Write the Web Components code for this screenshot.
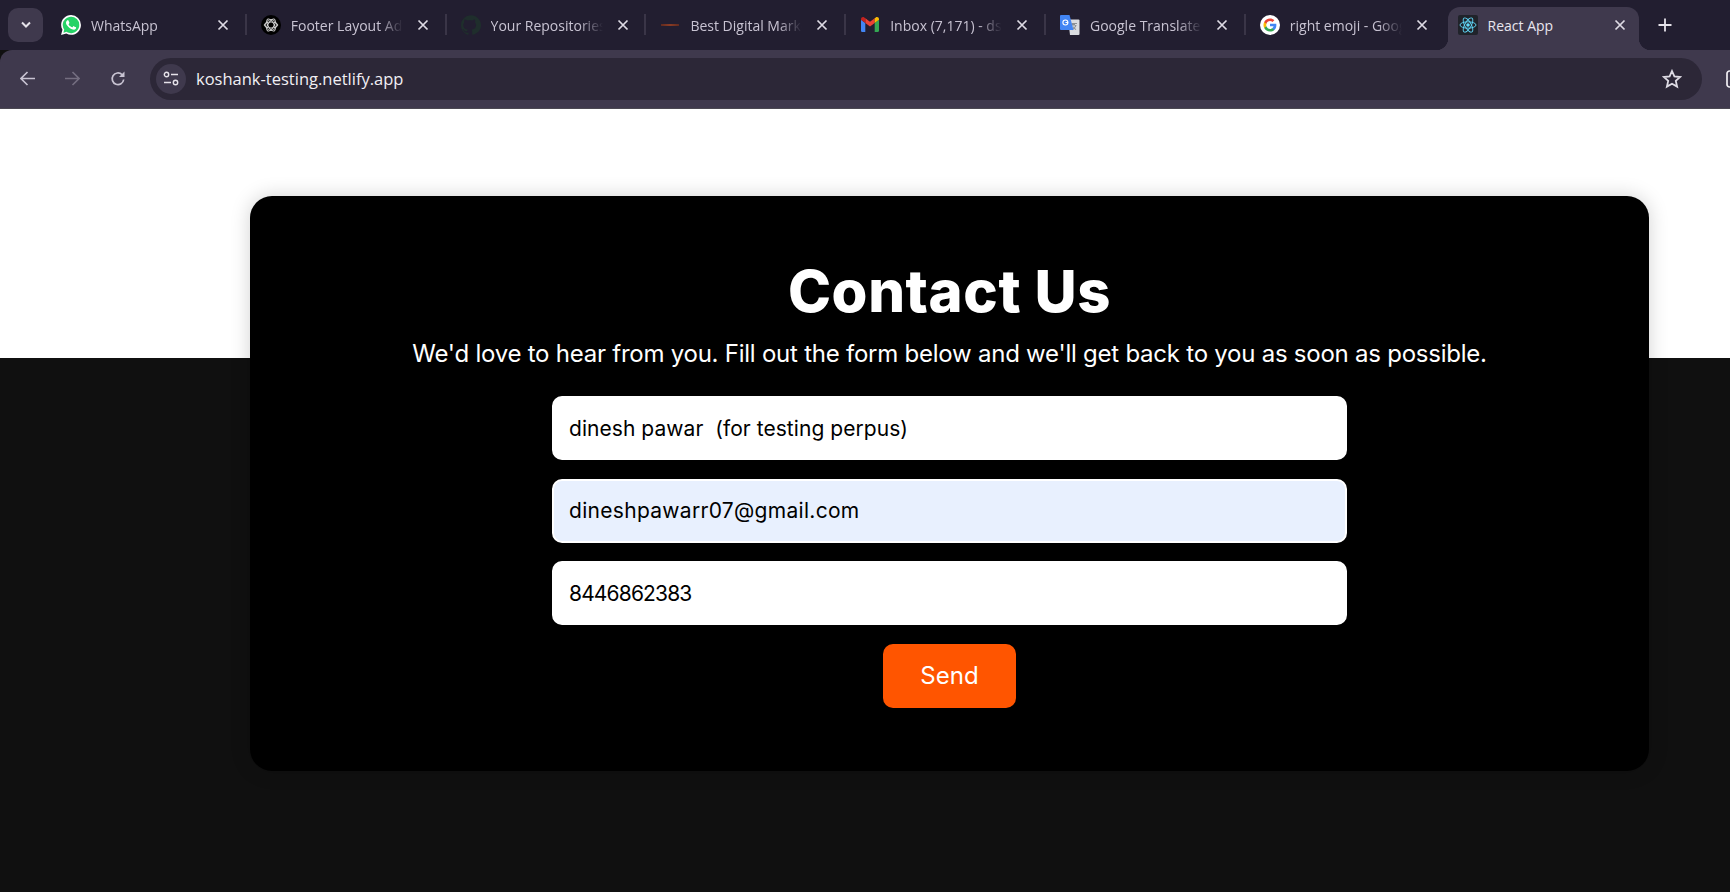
<!DOCTYPE html>
<html lang="en">
<head>
<meta charset="utf-8">
<title>React App</title>
<style>
  html, body { margin: 0; height: 100%; overflow: hidden; background: #101010; }
</style>
</head>
<body>
<browser-window>
  <tab-strip>
    <browser-tab icon="whatsapp">WhatsApp</browser-tab>
    <browser-tab icon="chatgpt">Footer Layout Advice</browser-tab>
    <browser-tab icon="github">Your Repositories</browser-tab>
    <browser-tab icon="dash">Best Digital Marketing</browser-tab>
    <browser-tab icon="gmail">Inbox (7,171) - dsp</browser-tab>
    <browser-tab icon="translate">Google Translate</browser-tab>
    <browser-tab icon="google">right emoji - Google</browser-tab>
    <browser-tab icon="react" active>React App</browser-tab>
  </tab-strip>
  <browser-toolbar url="koshank-testing.netlify.app"></browser-toolbar>
  <contact-page>
    <contact-card heading="Contact Us" intro="We'd love to hear from you. Fill out the form below and we'll get back to you as soon as possible.">
      <form-field style="--track:.05px">dinesh pawar  (for testing perpus)</form-field>
      <form-field autofilled style="--track:.3px">dineshpawarr07@gmail.com</form-field>
      <form-field style="--track:-.85px">8446862383</form-field>
      <send-button>Send</send-button>
    </contact-card>
  </contact-page>
</browser-window>

<script>
const ICONS = {
  whatsapp: `<svg viewBox="0 0 24 24"><path fill="#25d366" d="M2 22l1.400-5.200A10.400 10.400 0 1 1 7.300 20.800z"/><path fill="#fff" d="M17.472 14.382c-.297-.149-1.758-.867-2.03-.967-.273-.099-.471-.148-.67.15-.197.297-.767.966-.94 1.164-.173.199-.347.223-.644.075-.297-.15-1.255-.463-2.39-1.475-.883-.788-1.48-1.761-1.653-2.059-.173-.297-.018-.458.13-.606.134-.133.298-.347.446-.52.149-.174.198-.298.298-.497.099-.198.05-.371-.025-.52-.075-.149-.669-1.612-.916-2.207-.242-.579-.487-.5-.669-.51-.173-.008-.371-.01-.57-.01-.198 0-.52.074-.792.372-.272.297-1.04 1.016-1.04 2.479 0 1.462 1.065 2.875 1.213 3.074.149.198 2.096 3.2 5.077 4.487.709.306 1.262.489 1.694.625.712.227 1.36.195 1.871.118.571-.085 1.758-.719 2.006-1.413.248-.694.248-1.289.173-1.413-.074-.124-.272-.198-.57-.347m-5.421 7.403h-.004a9.87 9.87 0 01-5.031-1.378l-.361-.214-3.741.982.998-3.648-.235-.374a9.86 9.86 0 01-1.51-5.26c.001-5.45 4.436-9.884 9.888-9.884 2.64 0 5.122 1.03 6.988 2.898a9.825 9.825 0 012.893 6.994c-.003 5.45-4.437 9.884-9.885 9.884m8.413-18.297A11.815 11.815 0 0012.05 0C5.495 0 .16 5.335.157 11.892c0 2.096.547 4.142 1.588 5.945L.057 24l6.305-1.654a11.882 11.882 0 005.683 1.448h.005c6.554 0 11.89-5.335 11.893-11.893a11.821 11.821 0 00-3.48-8.413z"/></svg>`,
  chatgpt: `<svg viewBox="0 0 20 20"><circle cx="10" cy="10" r="10" fill="#000"/><g fill="none" stroke="#dcdcdc" stroke-width=".9"><ellipse cx="10" cy="10" rx="6.800" ry="3"/><ellipse cx="10" cy="10" rx="6.800" ry="3" transform="rotate(60 10 10)"/><ellipse cx="10" cy="10" rx="6.800" ry="3" transform="rotate(120 10 10)"/><circle cx="10" cy="10" r="5.400"/></g></svg>`,
  github: `<svg viewBox="0 0 24 24"><path fill="#1f2e2c" d="M12 .297c-6.63 0-12 5.373-12 12 0 5.303 3.438 9.8 8.205 11.385.6.113.82-.258.82-.577 0-.285-.01-1.04-.015-2.04-3.338.724-5.59-1.475-5.59-1.475-.546-1.385-1.335-1.755-1.335-1.755-1.087-.744.084-.729.084-.729 1.205.084 1.838 1.236 1.838 1.236 1.07 1.835 2.809 1.305 3.495.998.108-.776.417-1.305.76-1.605-2.665-.3-5.466-1.332-5.466-5.93 0-1.31.465-2.38 1.235-3.22-.135-.303-.54-1.523.105-3.176 0 0 1.005-.322 3.3 1.23.96-.267 1.98-.399 3-.405 1.02.006 2.04.138 3 .405 2.28-1.552 3.285-1.23 3.285-1.23.645 1.653.24 2.873.12 3.176.765.84 1.23 1.91 1.23 3.22 0 4.61-2.805 5.625-5.475 5.92.42.36.81 1.096.81 2.22 0 1.606-.015 2.896-.015 3.286 0 .315.21.69.825.57C20.565 22.092 24 17.592 24 12.297c0-6.627-5.373-12-12-12"/></svg>`,
  dash: `<svg viewBox="0 0 20 20"><defs><linearGradient id="d"><stop offset="0" stop-color="#7a2f18"/><stop offset=".5" stop-color="#b5481f"/><stop offset="1" stop-color="#7a2f18"/></linearGradient></defs><rect x="1" y="9.300" width="18" height="1.400" fill="url(#d)"/></svg>`,
  gmail: `<svg viewBox="0 0 20 20"><path fill="#4285f4" d="M1 17V4.800l4.300 3.300V17H2.200A1.200 1.200 0 0 1 1 15.800z"/><path fill="#34a853" d="M19 17V4.800l-4.300 3.300V17h2.900a1.400 1.400 0 0 0 1.400-1.200z"/><path fill="#ea4335" d="M5.300 8.100V3.300L10 6.800l4.700-3.500v4.800L10 11.600z"/><path fill="#fbbc04" d="M14.700 8.100V3.300l1.100-.8C17.200 1.500 19 2.500 19 4.300v.5z"/><path fill="#c5221f" d="M5.300 8.100V3.300l-1.100-.8C2.800 1.500 1 2.500 1 4.300v.5z"/></svg>`,
  translate: `<svg viewBox="0 0 20 20"><path fill="#dadce0" d="M8 4.500h10.500a1 1 0 0 1 1 1V19a1 1 0 0 1-1 1H10z"/><path fill="#8a8f94" d="M11.500 8h5.500v1h-2v1h1.600c-.3 1.300-1 2.200-1.800 3l1.500 1.300-.6.700-1.600-1.300-1.700 1.500-.6-.7 1.700-1.500-1-1.600h1l.6 1c.5-.6.900-1.200 1.100-1.900h-4z"/><path fill="#4285f4" d="M1 0h8.500l4 15H1a1 1 0 0 1-1-1V1a1 1 0 0 1 1-1z"/><circle cx="5.400" cy="7.500" r="2.500" fill="none" stroke="#fff" stroke-width="1.100"/><path d="M5.500 7.500h2.600" stroke="#fff" stroke-width="1"/></svg>`,
  google: `<svg viewBox="0 0 20 20"><circle cx="10" cy="10" r="10" fill="#fff"/><g transform="translate(3.500 3.500) scale(.271)"><path fill="#4285f4" d="M47.500 24.500c0-1.600-.1-3.200-.4-4.700H24v9h13.200c-.6 3-2.300 5.600-4.900 7.300v6h7.900c4.600-4.300 7.300-10.500 7.300-17.600z"/><path fill="#34a853" d="M24 48c6.500 0 11.900-2.100 15.900-5.900l-7.900-6c-2.200 1.500-4.900 2.300-8 2.300-6.100 0-11.400-4.100-13.200-9.700H2.600v6.200C6.600 42.800 14.700 48 24 48z"/><path fill="#fbbc04" d="M10.800 28.700c-1-3-1-6.300 0-9.300v-6.200H2.600c-3.500 6.900-3.500 14.900 0 21.800z"/><path fill="#ea4335" d="M24 9.500c3.500 0 6.700 1.200 9.100 3.600l6.900-6.900C35.900 2.300 30.400 0 24 0 14.700 0 6.600 5.200 2.600 13.200l8.200 6.200C12.600 13.700 17.900 9.500 24 9.500z"/></g></svg>`,
  react: `<svg viewBox="0 0 20 20"><rect width="20" height="20" rx="2" fill="#20232a"/><circle cx="10" cy="10" r="1.800" fill="#61dafb"/><g fill="none" stroke="#61dafb" stroke-width=".9"><ellipse cx="10" cy="10" rx="8" ry="3.200"/><ellipse cx="10" cy="10" rx="8" ry="3.200" transform="rotate(60 10 10)"/><ellipse cx="10" cy="10" rx="8" ry="3.200" transform="rotate(120 10 10)"/></g></svg>`
};

class BrowserWindow extends HTMLElement {
  constructor() {
    super();
    this.attachShadow({ mode: "open" });
    this.shadowRoot.innerHTML = `
      <style>
        :host { display: flex; flex-direction: column; width: 1730px; height: 892px; overflow: hidden; }
      </style>
      <slot></slot>
    `;
  }
}

class TabStrip extends HTMLElement {
  constructor() {
    super();
    this.attachShadow({ mode: "open" });
    this.shadowRoot.innerHTML = `
      <style>
        :host { display: flex; height: 50px; background: #221e30; box-sizing: border-box; padding-left: 8px; flex: none; }
        .list { display: flex; align-items: flex-start; height: 50px; }
        .chevron { width: 35px; height: 34px; margin-top: 8px; margin-right: 4px; border-radius: 10px; background: #3f394d; display: flex; align-items: center; justify-content: center; }
        .plus { margin: 15px 0 0 10px; width: 20px; height: 20px; }
        svg { display: block; }
      </style>
      <div class="chevron"><svg width="12" height="8" viewBox="0 0 12 8"><path d="M2 1.500l4 4 4-4" fill="none" stroke="#e6e3ea" stroke-width="2"/></svg></div>
      <div class="list"><slot></slot></div>
      <div class="plus"><svg width="20" height="20" viewBox="0 0 20 20"><path d="M10 3.500v13M3.500 10h13" stroke="#e6e3ea" stroke-width="1.800"/></svg></div>
    `;
  }
}

class BrowserTab extends HTMLElement {
  constructor() {
    super();
    this.attachShadow({ mode: "open" });
  }
  connectedCallback() {
    const icon = ICONS[this.getAttribute("icon")] || "";
    this.shadowRoot.innerHTML = `
      <style>
        :host { display: flex; align-items: center; position: relative; box-sizing: border-box; width: 199.800px; height: 43px; margin-top: 7px; padding: 0 14px 7px 14px; font: 14px "Open Sans", sans-serif; color: #c8c3d2; }
        :host(:not([active]))::after { content: ""; position: absolute; right: 0; top: 7px; width: 2px; height: 21px; background: #3a3547; }
        :host(:nth-last-child(2))::after, :host([active])::after { display: none; }
        .pill { display: none; }
        :host([active]) { color: #e8e5ed; padding-left: 12px; }
        :host([active]) .pill { display: block; position: absolute; left: 2px; right: 6px; top: 0; bottom: 0; background: #3f394d; border-radius: 12px 12px 0 0; }
        :host([active]) .pill::before, :host([active]) .pill::after { content: ""; position: absolute; bottom: 0; width: 12px; height: 12px; }
        :host([active]) .pill::before { left: -12px; background: radial-gradient(circle at 0 0, transparent 12px, #3f394d 12.500px); }
        :host([active]) .pill::after { right: -12px; background: radial-gradient(circle at 100% 0, transparent 12px, #3f394d 12.500px); }
        .icon, .title, .close { position: relative; }
        .icon { width: 20px; height: 20px; flex: none; margin-right: 10px; }
        .icon svg { display: block; width: 20px; height: 20px; }
        .title { width: 112px; white-space: nowrap; overflow: hidden; -webkit-mask-image: linear-gradient(90deg, #000 88px, transparent 112px); mask-image: linear-gradient(90deg, #000 88px, transparent 112px); }
        :host([active]) .title { -webkit-mask-image: none; mask-image: none; }
        .close { width: 12px; height: 12px; margin-left: 14px; flex: none; }
        .close svg { display: block; }
      </style>
      <div class="pill"></div>
      <div class="icon">${icon}</div>
      <div class="title"><slot></slot></div>
      <div class="close"><svg width="12" height="12" viewBox="0 0 12 12"><path d="M1.500 1.500l9 9M10.500 1.500l-9 9" stroke="#dedbe4" stroke-width="1.700"/></svg></div>
    `;
  }
}

class BrowserToolbar extends HTMLElement {
  constructor() {
    super();
    this.attachShadow({ mode: "open" });
  }
  connectedCallback() {
    this.shadowRoot.innerHTML = `
      <style>
        :host { display: flex; align-items: center; flex: none; height: 59px; box-sizing: border-box; background: #3f394d; border-radius: 12px 0 0 0; border-bottom: 1px solid #4b4852; padding: 0 0 1px 20px; }
        svg { display: block; flex: none; }
        .nav { display: flex; gap: 30px; margin-right: 24px; }
        .omnibox { display: flex; align-items: center; width: 1552px; height: 42px; border-radius: 21px; background: #2c2737; box-sizing: border-box; padding: 0 20px 0 6px; flex: none; font: 16.500px "Open Sans", sans-serif; color: #f1eff4; }
        .site { width: 30px; height: 30px; border-radius: 50%; background: #3f394d; display: flex; align-items: center; justify-content: center; margin-right: 10px; }
        .url { flex: 1; white-space: nowrap; }
        .panel { margin-left: 24px; }
      </style>
      <div class="nav">
        <svg width="15" height="15" viewBox="0 0 15 15"><path d="M15 7.500H1.500M7.500 1L1 7.500 7.500 14" fill="none" stroke="#c8c3d2" stroke-width="1.600"/></svg>
        <svg width="15" height="15" viewBox="0 0 15 15"><path d="M0 7.500h13.500M7.500 1L14 7.500 7.500 14" fill="none" stroke="#746e80" stroke-width="1.600"/></svg>
        <svg width="16" height="16" viewBox="0 0 16 16"><path d="M13.700 8.500A5.800 5.800 0 1 1 12 3.600" fill="none" stroke="#c8c3d2" stroke-width="1.700"/><path d="M14.500 0.500v5.500H9z" fill="#c8c3d2"/></svg>
      </div>
      <div class="omnibox">
        <div class="site"><svg width="16" height="16" viewBox="0 0 16 16" fill="none" stroke="#e6e3ea" stroke-width="1.400"><circle cx="3.500" cy="3.500" r="2.200"/><path d="M8 3.500h7M1 11.500h7"/><circle cx="12.500" cy="11.500" r="2.200"/></svg></div>
        <div class="url">${this.getAttribute("url")}</div>
        <svg width="20" height="20" viewBox="0 0 20 20"><path d="M10 2l2.400 5.400 5.800.6-4.400 3.900 1.300 5.700L10 14.700l-5.100 2.900 1.300-5.700L1.800 8l5.800-.6z" fill="none" stroke="#dedbe4" stroke-width="1.800"/></svg>
      </div>
      <svg class="panel" width="18" height="18" viewBox="0 0 18 18"><rect x="1" y="1" width="16" height="16" rx="2.500" fill="none" stroke="#f1eff4" stroke-width="1.700"/></svg>
    `;
  }
}

class ContactPage extends HTMLElement {
  constructor() {
    super();
    this.attachShadow({ mode: "open" });
    this.shadowRoot.innerHTML = `
      <style>
        :host { display: block; flex: 1; box-sizing: border-box; padding: 87px 0 0 250px; background: linear-gradient(#fff 249px, #101010 249px); }
      </style>
      <slot></slot>
    `;
  }
}

class ContactCard extends HTMLElement {
  constructor() {
    super();
    this.attachShadow({ mode: "open" });
  }
  connectedCallback() {
    this.shadowRoot.innerHTML = `
      <style>
        :host { display: flex; flex-direction: column; align-items: center; box-sizing: border-box; width: 1399px; height: 575px; padding-top: 61px; background: #000; border-radius: 22px; box-shadow: 0 0 20px rgba(0,0,0,.18); color: #fff; font-family: Inter, "Liberation Sans", sans-serif; }
        h1 { margin: 0; font-size: 58px; line-height: 68px; font-weight: 800; letter-spacing: .6px; }
        p { margin: 14px 0 0; font-size: 24px; line-height: 29px; letter-spacing: -.24px; white-space: nowrap; }
        form { display: flex; flex-direction: column; align-items: center; gap: 18.670px; width: 795px; margin-top: 28px; }
      </style>
      <h1>${this.getAttribute("heading")}</h1>
      <p>${this.getAttribute("intro")}</p>
      <form><slot></slot></form>
    `;
  }
}

class FormField extends HTMLElement {
  constructor() {
    super();
    this.attachShadow({ mode: "open" });
    this.shadowRoot.innerHTML = `
      <style>
        :host { display: flex; align-items: center; box-sizing: border-box; width: 795px; height: 64px; padding: 0 15px; background: #fff; border: 2px solid #fff; border-radius: 10px; color: #000; font-size: 21px; }
        :host([autofilled]) { background: #e8f0fe; }
        span { white-space: pre; letter-spacing: var(--track, 0); }
      </style>
      <span><slot></slot></span>
    `;
  }
}

class SendButton extends HTMLElement {
  constructor() {
    super();
    this.attachShadow({ mode: "open" });
    this.shadowRoot.innerHTML = `
      <style>
        :host { display: flex; align-items: center; justify-content: center; width: 133px; height: 64px; background: #ff5500; border-radius: 10px; color: #fff; font-size: 24px; }
      </style>
      <slot></slot>
    `;
  }
}

customElements.define("browser-window", BrowserWindow);
customElements.define("tab-strip", TabStrip);
customElements.define("browser-tab", BrowserTab);
customElements.define("browser-toolbar", BrowserToolbar);
customElements.define("contact-page", ContactPage);
customElements.define("contact-card", ContactCard);
customElements.define("form-field", FormField);
customElements.define("send-button", SendButton);
</script>
</body>
</html>
